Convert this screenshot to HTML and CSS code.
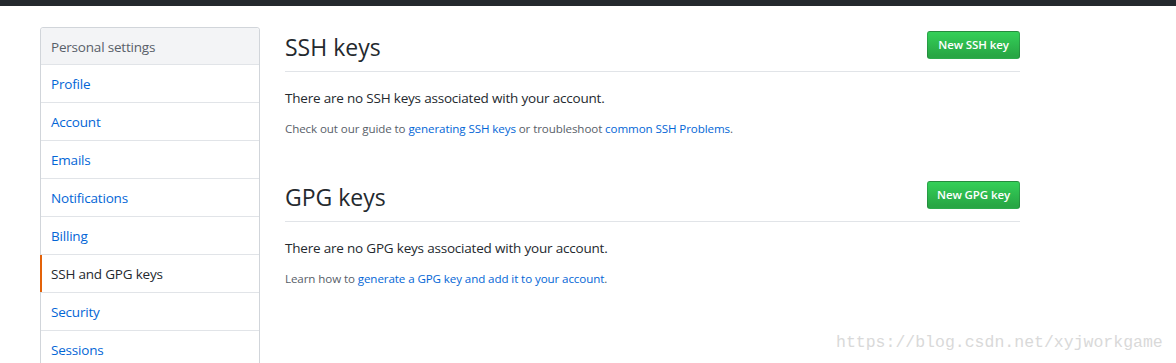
FILE: index.html
```html
<!DOCTYPE html>
<html>
<head>
<meta charset="utf-8">
<link rel="stylesheet" href="styles.css">
</head>
<body>
<div class="topbar"></div>
<div class="page">
  <nav class="menu">
    <div class="menu-head">Personal settings</div>
    <a class="menu-item">Profile</a>
    <a class="menu-item">Account</a>
    <a class="menu-item">Emails</a>
    <a class="menu-item">Notifications</a>
    <a class="menu-item">Billing</a>
    <a class="menu-item selected">SSH and GPG keys</a>
    <a class="menu-item">Security</a>
    <a class="menu-item">Sessions</a>
  </nav>
  <main class="main">
    <section class="keys">
      <div class="subhead">
        <h2 class="subhead-title">SSH keys</h2>
        <a class="btn">New SSH key</a>
      </div>
      <p class="blank">There are no SSH keys associated with your account.</p>
      <p class="note">Check out our guide to <a>generating SSH keys</a> or troubleshoot <a>common SSH Problems</a>.</p>
    </section>
    <section class="keys gpg">
      <div class="subhead">
        <h2 class="subhead-title">GPG keys</h2>
        <a class="btn">New GPG key</a>
      </div>
      <p class="blank">There are no GPG keys associated with your account.</p>
      <p class="note">Learn how to <a>generate a GPG key and add it to your account</a>.</p>
    </section>
  </main>
</div>
<div class="watermark">https://blog.csdn.net/xyjworkgame</div>
</body>
</html>
```
FILE: styles.css
```css
html, body {
  margin: 0;
  padding: 0;
  background: #fff;
  overflow: hidden;
}
body {
  font-family: "Open Sans", "Noto Sans", sans-serif;
  font-size: 13.5px;
  letter-spacing: -0.2px;
  color: #24292e;
  height: 363px;
  position: relative;
}
.topbar {
  height: 6px;
  background: #24292e;
}
.page {
  display: flex;
  gap: 25px;
  width: 980px;
  margin: 21px 0 0 40px;
}
.menu {
  width: 220px;
  flex: none;
  box-sizing: border-box;
  border: 1px solid #d1d5da;
  border-radius: 3px;
  display: flex;
  flex-direction: column;
}
.menu-head {
  background: #f3f4f6;
  color: #586069;
  padding: 9px 10px 6px;
  line-height: 21px;
  border-radius: 3px 3px 0 0;
}
.menu-item {
  display: block;
  position: relative;
  border-top: 1px solid #e1e4e8;
  padding: 9px 10px 7px;
  line-height: 21px;
  color: #0366d6;
}
.menu-item.selected {
  color: #24292e;
}
.menu-item.selected::before {
  content: "";
  position: absolute;
  left: -1px;
  top: 0;
  bottom: 0;
  width: 2px;
  background: #e36209;
}
.main {
  flex: 1;
}
.keys.gpg {
  margin-top: 39px;
}
.subhead {
  display: flex;
  align-items: flex-start;
  justify-content: space-between;
  padding: 4px 0 8px;
  border-bottom: 1px solid #e1e4e8;
}
.subhead-title {
  margin: 0;
  font-size: 23px;
  font-weight: 400;
  letter-spacing: 0;
  line-height: 32px;
}
.btn {
  display: inline-block;
  box-sizing: border-box;
  width: 93px;
  height: 28px;
  text-align: center;
  line-height: 26px;
  font-size: 11.5px;
  font-weight: 600;
  letter-spacing: -0.1px;
  color: #fff;
  border: 1px solid rgba(27,31,35,0.2);
  border-radius: 3px;
  background: linear-gradient(#34d058, #28a745 90%);
}
.blank {
  margin: 16px 0 0;
  line-height: 21px;
}
.note {
  margin: 11px 0 0;
  font-size: 11.6px;
  letter-spacing: -0.1px;
  line-height: 18px;
  color: #586069;
}
.note a {
  color: #0366d6;
}
.watermark {
  position: absolute;
  left: 836px;
  top: 333px;
  font-family: "Liberation Mono", monospace;
  font-size: 16.5px;
  letter-spacing: 0;
  line-height: 20px;
  color: #d9d9d9;
}
```
